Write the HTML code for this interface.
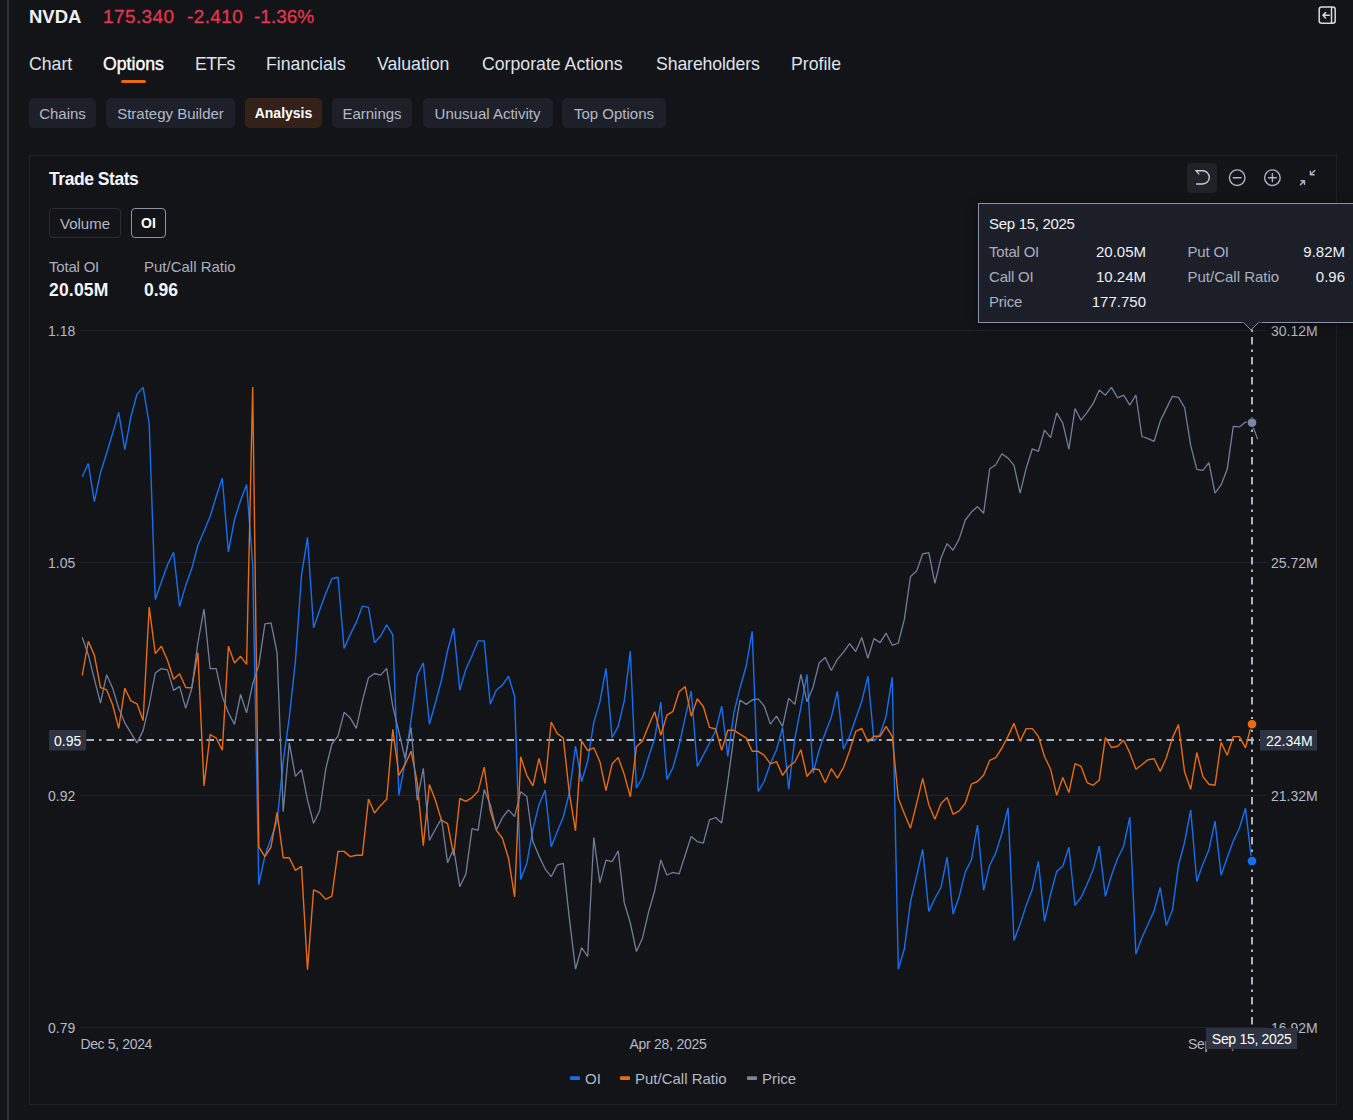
<!DOCTYPE html>
<html><head><meta charset="utf-8">
<style>
*{box-sizing:border-box;margin:0;padding:0}
html,body{width:1353px;height:1120px;background:#131418;overflow:hidden}
body{font-family:"Liberation Sans",Arial,sans-serif;color:#e9ebf0;position:relative}
.abs{position:absolute;white-space:nowrap}
.vline{position:absolute;left:7px;top:0;width:2px;height:1120px;background:#2a303c}
.hdr{top:5.5px;font-size:19px;line-height:22px;letter-spacing:.4px;color:#e5354f;-webkit-text-stroke:.3px #e5354f}
.tabs span{position:absolute;top:53px;font-size:17.7px;line-height:22px;color:#dfe2ea}
.pill{position:absolute;top:98px;height:30px;border-radius:5px;background:#1e2029;color:#b4b9c6;font-size:15px;line-height:31.5px;text-align:center}
.card{position:absolute;left:29px;top:155px;width:1308px;height:950px;border:1px solid #1d2129;}
.tt{position:absolute;left:978px;top:203px;width:400px;height:120px;background:#1c1f28;border:1px solid #8a93a8;box-shadow:0 2px 8px rgba(0,0,0,.5);font-size:15px}
.tt div{position:absolute;white-space:nowrap;line-height:18px}
.tt .l{color:#aab0bf;letter-spacing:-.2px}
.tt .v{color:#eef0f4;text-align:right}
</style></head><body>
<div class="vline"></div>
<div class="abs" style="left:29px;top:5.5px;font-size:18.5px;line-height:22px;font-weight:700;color:#f1f2f5">NVDA</div>
<div class="abs hdr" style="left:103px">175.340</div>
<div class="abs hdr" style="left:187px">-2.410</div>
<div class="abs hdr" style="left:254px;letter-spacing:0">-1.36%</div>
<svg class="abs" style="left:1317px;top:5px" width="20" height="20" viewBox="0 0 20 20" fill="none" stroke="#d5d9e6" stroke-width="1.5" stroke-linecap="round" stroke-linejoin="round"><rect x="2.2" y="2.1" width="16" height="16.2" rx="2.5"/><path d="M14.5 2.5V18M12.3 10.3H6M8.6 7.6L5.9 10.3L8.6 13"/></svg>
<div class="tabs">
<span style="left:29px">Chart</span>
<span style="left:103px;color:#fff;-webkit-text-stroke:.35px #fff">Options</span>
<span style="left:195px;letter-spacing:-.6px">ETFs</span>
<span style="left:266px">Financials</span>
<span style="left:377px">Valuation</span>
<span style="left:482px">Corporate Actions</span>
<span style="left:656px;letter-spacing:-.12px">Shareholders</span>
<span style="left:791px">Profile</span>
</div>
<div class="abs" style="left:121px;top:80px;width:25px;height:3px;background:#e8690f;border-radius:1.5px"></div>
<div class="pill" style="left:29px;width:67px">Chains</div>
<div class="pill" style="left:106px;width:129px">Strategy Builder</div>
<div class="pill" style="left:245px;width:77px;background:#34211a;color:#fff;font-weight:700;font-size:14px">Analysis</div>
<div class="pill" style="left:332px;width:80px">Earnings</div>
<div class="pill" style="left:422.5px;width:130px">Unusual Activity</div>
<div class="pill" style="left:562px;width:104px">Top Options</div>
<div class="card"></div>
<div class="abs" style="left:49px;top:168.3px;font-size:17.5px;line-height:22px;font-weight:700;color:#f4f5f8;letter-spacing:-.45px">Trade Stats</div>
<div class="abs" style="left:49px;top:208px;width:72px;height:29.5px;border:1px solid #2a2d38;border-radius:4px;font-size:15px;line-height:29px;text-align:center;color:#b4b9c6">Volume</div>
<div class="abs" style="left:131px;top:208px;width:35px;height:29.5px;border:1.5px solid #8a93a8;border-radius:4px;font-size:14px;line-height:28px;text-align:center;color:#fff;font-weight:700">OI</div>
<div class="abs" style="left:49px;top:257.6px;font-size:15px;line-height:18px;color:#aab0bf;letter-spacing:-.2px">Total OI</div>
<div class="abs" style="left:144px;top:257.6px;font-size:15px;line-height:18px;color:#aab0bf">Put/Call Ratio</div>
<div class="abs" style="left:49px;top:279.8px;font-size:17.5px;line-height:20px;color:#f4f5f8;font-weight:700;letter-spacing:.2px">20.05M</div>
<div class="abs" style="left:144px;top:279.8px;font-size:17.5px;line-height:20px;color:#f4f5f8;font-weight:700">0.96</div>
<div class="abs" style="left:1187px;top:163px;width:30px;height:30px;border-radius:4px;background:#202228"></div>
<svg class="abs" style="left:1187px;top:163px" width="140" height="30" viewBox="0 0 140 30" fill="none" stroke="#adb4c5" stroke-width="1.4" stroke-linecap="round" stroke-linejoin="round">
<path stroke="#c8ccd8" d="M9.6 21H15.65A6.65 6.65 0 0 0 15.65 7.7H9.1L11.8 10.9" stroke-linejoin="miter"/>
<circle cx="50.2" cy="14.7" r="7.8"/><path d="M46.3 14.7H54.1"/>
<circle cx="85.4" cy="14.7" r="7.8"/><path d="M81.5 14.7H89.3M85.4 10.8V18.6"/>
<path d="M127.8 7.4L123.6 11.6M123.4 8.2V11.8H127.2M113.4 21.8L117.4 17.8M117.5 21.2V17.7H114"/>
</svg>
<!--CS--><svg class="abs" style="left:0;top:0" width="1353" height="1120" viewBox="0 0 1353 1120" font-family="Liberation Sans, Arial, sans-serif">
<g stroke="#1f232c" stroke-width="1" shape-rendering="crispEdges">
<line x1="80" x2="1267" y1="330.5" y2="330.5"/><line x1="80" x2="1267" y1="562.5" y2="562.5"/><line x1="80" x2="1267" y1="795.5" y2="795.5"/><line x1="80" x2="1267" y1="1027.5" y2="1027.5"/>
</g>
<g font-size="14" fill="#b3b9c7">
<text x="48" y="336">1.18</text><text x="48" y="568">1.05</text><text x="48" y="801">0.92</text><text x="48" y="1033">0.79</text>
<text x="1271" y="336">30.12M</text><text x="1271" y="568">25.72M</text><text x="1271" y="801">21.32M</text><text x="1271" y="1033">16.92M</text>
<text x="80.4" y="1049" letter-spacing="-0.35">Dec 5, 2024</text><text x="668" y="1049" text-anchor="middle" letter-spacing="-0.25">Apr 28, 2025</text><text x="1188" y="1049" letter-spacing="-0.3">Sep 15, 2025</text>
</g>
<g stroke="#aab2c5" stroke-width="2" fill="none">
<line x1="1252" x2="1252" y1="329.5" y2="1028" stroke-dasharray="2.5 5 7.5 5"/>
<line x1="86.5" x2="1260" y1="740" y2="740" stroke-dasharray="7.5 5 2.5 5"/>
</g>
<g fill="none" stroke-width="1.4" stroke-linejoin="bevel">
<polyline stroke="#1570f0" points="82.2,476.7 88.3,463.5 94.4,501.7 100.5,472.6 106.6,453.2 112.7,433.1 118.7,412.4 124.8,449.6 130.9,416.8 137.0,394.1 143.1,387.4 149.2,424.0 155.3,599.4 161.4,582.0 167.5,564.8 173.6,552.3 179.6,606.6 185.7,585.4 191.8,568.6 197.9,545.2 204.0,531.3 210.1,516.6 216.2,496.5 222.3,478.2 228.4,551.9 234.5,519.5 240.6,500.5 246.6,484.5 252.7,565.3 258.8,884.5 264.9,855.9 271.0,838.5 277.1,821.3 283.2,761.9 289.3,717.2 295.4,661.4 301.5,575.3 307.5,537.4 313.6,627.8 319.7,609.9 325.8,593.2 331.9,578.7 338.0,577.3 344.1,648.5 350.2,634.6 356.3,622.4 362.4,606.1 368.5,607.4 374.5,642.7 380.6,636.0 386.7,624.9 392.8,634.9 398.9,795.4 405.0,762.3 411.1,719.7 417.2,675.1 423.3,662.8 429.4,724.2 435.4,703.0 441.5,680.0 447.6,650.5 453.7,628.2 459.8,690.3 465.9,669.1 472.0,655.7 478.1,640.9 484.2,640.9 490.3,704.1 496.4,690.0 502.4,685.1 508.5,676.2 514.6,696.3 520.7,879.5 526.8,863.4 532.9,829.3 539.0,804.7 545.1,790.2 551.2,846.7 557.3,831.5 563.3,817.0 569.4,792.5 575.5,746.2 581.6,781.7 587.7,761.2 593.8,722.4 599.9,701.9 606.0,668.4 612.1,737.6 618.2,726.4 624.3,700.8 630.3,651.2 636.4,788.0 642.5,777.5 648.6,756.7 654.7,738.6 660.8,702.2 666.9,779.4 673.0,767.6 679.1,745.3 685.2,717.4 691.2,691.2 697.3,766.5 703.4,754.9 709.5,743.0 715.6,730.8 721.7,706.2 727.8,756.4 733.9,712.9 740.0,687.7 746.1,666.5 752.2,631.4 758.2,791.5 764.3,781.0 770.4,763.6 776.5,749.7 782.6,727.4 788.7,789.2 794.8,738.6 800.9,707.3 807.0,674.5 813.1,773.2 819.2,749.7 825.2,733.0 831.3,717.4 837.4,691.2 843.5,749.3 849.6,736.3 855.7,718.5 861.8,701.3 867.9,676.1 874.0,741.2 880.1,734.1 886.1,716.2 892.2,677.2 898.3,969.2 904.4,948.7 910.5,901.8 916.6,876.2 922.7,849.4 928.8,911.4 934.9,898.5 941.0,887.3 947.1,857.4 953.1,914.3 959.2,896.4 965.3,871.9 971.4,860.0 977.5,825.0 983.6,890.4 989.7,865.2 995.8,852.9 1001.9,833.3 1008.0,807.8 1014.0,940.4 1020.1,924.3 1026.2,905.4 1032.3,889.3 1038.4,861.4 1044.5,921.4 1050.6,894.2 1056.7,871.4 1062.8,866.3 1068.9,847.3 1075.0,905.4 1081.0,897.5 1087.1,884.2 1093.2,869.6 1099.3,846.2 1105.4,896.4 1111.5,875.2 1117.6,858.5 1123.7,846.2 1129.8,817.2 1135.9,954.1 1141.9,937.7 1148.0,924.3 1154.1,910.9 1160.2,887.5 1166.3,925.4 1172.4,910.3 1178.5,865.2 1184.6,842.2 1190.7,810.0 1196.8,881.5 1202.9,864.1 1208.9,850.0 1215.0,821.2 1221.1,875.2 1227.2,857.8 1233.3,841.1 1239.4,828.3 1245.5,808.3 1251.6,861.1"/>
<polyline stroke="#e96c10" points="82.2,675.5 88.3,641.3 94.4,655.4 100.5,687.5 106.6,689.8 112.7,705.0 118.7,728.4 124.8,688.2 130.9,700.9 137.0,703.8 143.1,720.6 149.2,607.2 155.3,653.6 161.4,646.2 167.5,660.3 173.6,679.3 179.6,673.7 185.7,687.5 191.8,687.8 197.9,652.5 204.0,785.8 210.1,734.6 216.2,738.0 222.3,750.3 228.4,646.2 234.5,663.0 240.6,656.3 246.6,664.3 252.7,387.1 258.8,847.0 264.9,856.6 271.0,847.0 277.1,812.4 283.2,857.7 289.3,857.7 295.4,870.4 301.5,866.4 307.5,969.7 313.6,889.8 319.7,892.7 325.8,899.4 331.9,896.1 338.0,851.4 344.1,851.4 350.2,856.6 356.3,855.2 362.4,855.2 368.5,799.0 374.5,813.0 380.6,805.4 386.7,799.2 392.8,729.3 398.9,775.3 405.0,764.6 411.1,751.2 417.2,782.4 423.3,845.6 429.4,784.6 435.4,800.3 441.5,820.4 447.6,823.7 453.7,855.4 459.8,798.5 465.9,801.4 472.0,797.6 478.1,791.3 484.2,767.2 490.3,810.8 496.4,830.4 502.4,838.2 508.5,858.3 514.6,896.9 520.7,756.7 526.8,775.3 532.9,785.8 539.0,758.3 545.1,783.5 551.2,722.0 557.3,733.6 563.3,738.0 569.4,793.6 575.5,830.8 581.6,741.1 587.7,750.5 593.8,747.8 599.9,761.7 606.0,790.7 612.1,763.9 618.2,757.4 624.3,774.6 630.3,796.9 636.4,746.7 642.5,741.1 648.6,725.8 654.7,711.8 660.8,735.2 666.9,715.1 673.0,711.3 679.1,691.7 685.2,686.6 691.2,716.2 697.3,698.8 703.4,706.7 709.5,727.4 715.6,729.0 721.7,750.4 727.8,730.3 733.9,730.3 740.0,734.1 746.1,737.9 752.2,751.3 758.2,751.3 764.3,755.3 770.4,763.8 776.5,761.6 782.6,775.4 788.7,766.5 794.8,762.0 800.9,749.7 807.0,776.5 813.1,768.7 819.2,769.8 825.2,782.8 831.3,768.7 837.4,778.1 843.5,767.6 849.6,750.8 855.7,731.4 861.8,728.5 867.9,741.9 874.0,736.3 880.1,736.3 886.1,726.3 892.2,736.3 898.3,798.0 904.4,813.7 910.5,828.2 916.6,803.6 922.7,778.4 928.8,804.7 934.9,819.2 941.0,803.6 947.1,797.5 953.1,814.3 959.2,810.9 965.3,803.3 971.4,784.2 977.5,781.5 983.6,775.2 989.7,760.3 995.8,757.6 1001.9,748.0 1008.0,736.4 1014.0,723.4 1020.1,741.3 1026.2,728.6 1032.3,728.6 1038.4,736.4 1044.5,756.5 1050.6,769.2 1056.7,795.3 1062.8,777.5 1068.9,792.6 1075.0,763.6 1081.0,766.3 1087.1,782.6 1093.2,785.3 1099.3,779.9 1105.4,737.5 1111.5,747.5 1117.6,746.2 1123.7,740.2 1129.8,752.9 1135.9,769.2 1141.9,764.7 1148.0,759.8 1154.1,758.7 1160.2,771.4 1166.3,758.0 1172.4,737.9 1178.5,724.6 1184.6,772.1 1190.7,789.3 1196.8,752.5 1202.9,776.6 1208.9,784.2 1215.0,785.3 1221.1,742.4 1227.2,755.2 1233.3,736.6 1239.4,736.6 1245.5,747.8 1251.6,724.2"/>
<polyline stroke="#707e9b" stroke-width="1.3" points="82.2,637.3 88.3,654.7 94.4,679.3 100.5,703.2 106.6,674.8 112.7,688.2 118.7,708.3 124.8,722.8 130.9,732.9 137.0,742.9 143.1,730.6 149.2,705.0 155.3,673.0 161.4,668.6 167.5,669.9 173.6,690.4 179.6,686.4 185.7,708.3 191.8,688.2 197.9,642.5 204.0,609.0 210.1,668.6 216.2,668.6 222.3,696.7 228.4,712.8 234.5,724.4 240.6,694.5 246.6,712.8 252.7,683.8 258.8,665.4 264.9,623.9 271.0,622.8 277.1,652.9 283.2,811.7 289.3,742.9 295.4,776.4 301.5,769.7 307.5,799.8 313.6,823.3 319.7,810.5 325.8,768.6 331.9,744.0 338.0,736.2 344.1,712.3 350.2,717.9 356.3,728.4 362.4,700.9 368.5,677.7 374.5,673.5 380.6,675.1 386.7,668.4 392.8,706.3 398.9,732.0 405.0,758.3 411.1,727.5 417.2,800.3 423.3,768.3 429.4,840.4 435.4,829.3 441.5,818.6 447.6,862.8 453.7,848.7 459.8,886.7 465.9,873.9 472.0,828.6 478.1,830.4 484.2,789.6 490.3,804.7 496.4,830.0 502.4,817.7 508.5,809.9 514.6,816.6 520.7,791.8 526.8,796.5 532.9,841.6 539.0,856.1 545.1,868.8 551.2,876.6 557.3,865.0 563.3,863.4 569.4,918.6 575.5,969.2 581.6,947.6 587.7,956.5 593.8,837.5 599.9,882.9 606.0,860.1 612.1,861.7 618.2,850.9 624.3,902.9 630.3,923.0 636.4,951.6 642.5,938.2 648.6,911.9 654.7,890.7 660.8,859.9 666.9,875.0 673.0,872.4 679.1,873.9 685.2,855.0 691.2,836.4 697.3,841.6 703.4,843.1 709.5,819.9 715.6,817.5 721.7,823.0 727.8,781.3 733.9,736.3 740.0,700.0 746.1,704.4 752.2,700.0 758.2,698.8 764.3,706.2 770.4,724.1 776.5,716.2 782.6,726.3 788.7,698.4 794.8,704.4 800.9,674.5 807.0,701.7 813.1,687.2 819.2,662.7 825.2,657.5 831.3,670.5 837.4,659.3 843.5,652.2 849.6,643.7 855.7,651.5 861.8,637.5 867.9,658.2 874.0,638.6 880.1,642.6 886.1,633.2 892.2,645.3 898.3,643.0 904.4,619.2 910.5,576.5 916.6,571.1 922.7,553.8 928.8,552.6 934.9,583.4 941.0,557.9 947.1,543.6 953.1,550.3 959.2,538.9 965.3,520.0 971.4,512.1 977.5,506.6 983.6,513.3 989.7,468.8 995.8,464.8 1001.9,453.7 1008.0,458.1 1014.0,465.3 1020.1,493.2 1026.2,468.2 1032.3,448.8 1038.4,451.4 1044.5,430.2 1050.6,437.6 1056.7,412.8 1062.8,423.1 1068.9,449.2 1075.0,408.6 1081.0,420.2 1087.1,412.4 1093.2,403.4 1099.3,390.0 1105.4,395.2 1111.5,387.4 1117.6,397.9 1123.7,395.2 1129.8,405.2 1135.9,395.0 1141.9,436.5 1148.0,438.7 1154.1,441.4 1160.2,421.3 1166.3,408.6 1172.4,396.3 1178.5,397.4 1184.6,407.5 1190.7,445.4 1196.8,469.3 1202.9,470.4 1208.9,462.6 1215.0,493.2 1221.1,484.9 1227.2,469.3 1233.3,426.4 1239.4,426.9 1245.5,422.1 1251.6,422.7 1257.7,439.4"/>
</g>
<g stroke="#131418" stroke-width="1">
<circle cx="1252" cy="422.7" r="4.8" fill="#7a86a3"/>
<circle cx="1252" cy="724.2" r="4.8" fill="#e96c10"/>
<circle cx="1252" cy="861.1" r="4.8" fill="#1570f0"/>
</g>
<rect x="49" y="730" width="37" height="20.5" fill="#2d3340"/>
<text x="54" y="746" font-size="14" fill="#fff">0.95</text>
<rect x="1260" y="730" width="57" height="20.5" fill="#2d3340"/>
<text x="1266" y="746" font-size="14" fill="#fff">22.34M</text>
<rect x="1206" y="1028" width="91" height="21" fill="#2d3340"/>
<text x="1251.7" y="1044" font-size="14" fill="#fff" text-anchor="middle" letter-spacing="-0.3">Sep 15, 2025</text>
<rect x="570" y="1076.3" width="10" height="3.6" rx="1" fill="#1570f0"/><text x="585" y="1084" font-size="15" fill="#b3b9c7">OI</text>
<rect x="620" y="1076.3" width="10" height="3.6" rx="1" fill="#e96c10"/><text x="635" y="1084" font-size="15" fill="#b3b9c7">Put/Call Ratio</text>
<rect x="747" y="1076.3" width="10" height="3.6" rx="1" fill="#7a8394"/><text x="762" y="1084" font-size="15" fill="#b3b9c7">Price</text>
</svg><!--CE-->
<div class="tt">
<div style="left:10px;top:10.6px;color:#eef0f4;letter-spacing:-.3px">Sep 15, 2025</div>
<div class="l" style="left:10px;top:38.5px">Total OI</div><div class="v" style="right:231px;top:38.5px">20.05M</div>
<div class="l" style="left:10px;top:63.5px">Call OI</div><div class="v" style="right:231px;top:63.5px">10.24M</div>
<div class="l" style="left:10px;top:88.5px">Price</div><div class="v" style="right:231px;top:88.5px">177.750</div>
<div class="l" style="left:208.5px;top:38.5px">Put OI</div><div class="v" style="right:32px;top:38.5px">9.82M</div>
<div class="l" style="left:208.5px;top:63.5px;letter-spacing:0">Put/Call Ratio</div><div class="v" style="right:32px;top:63.5px">0.96</div>
</div>
<svg class="abs" style="left:1240px;top:320px" width="24" height="12" viewBox="0 0 24 12"><path d="M2 2.5H3.5L11 10L18.5 2.5H22V0H2Z" fill="#1c1f28"/><path d="M3.5 2.5L11 10L18.5 2.5" fill="none" stroke="#8a93a8" stroke-width="1"/></svg>
</body></html>
